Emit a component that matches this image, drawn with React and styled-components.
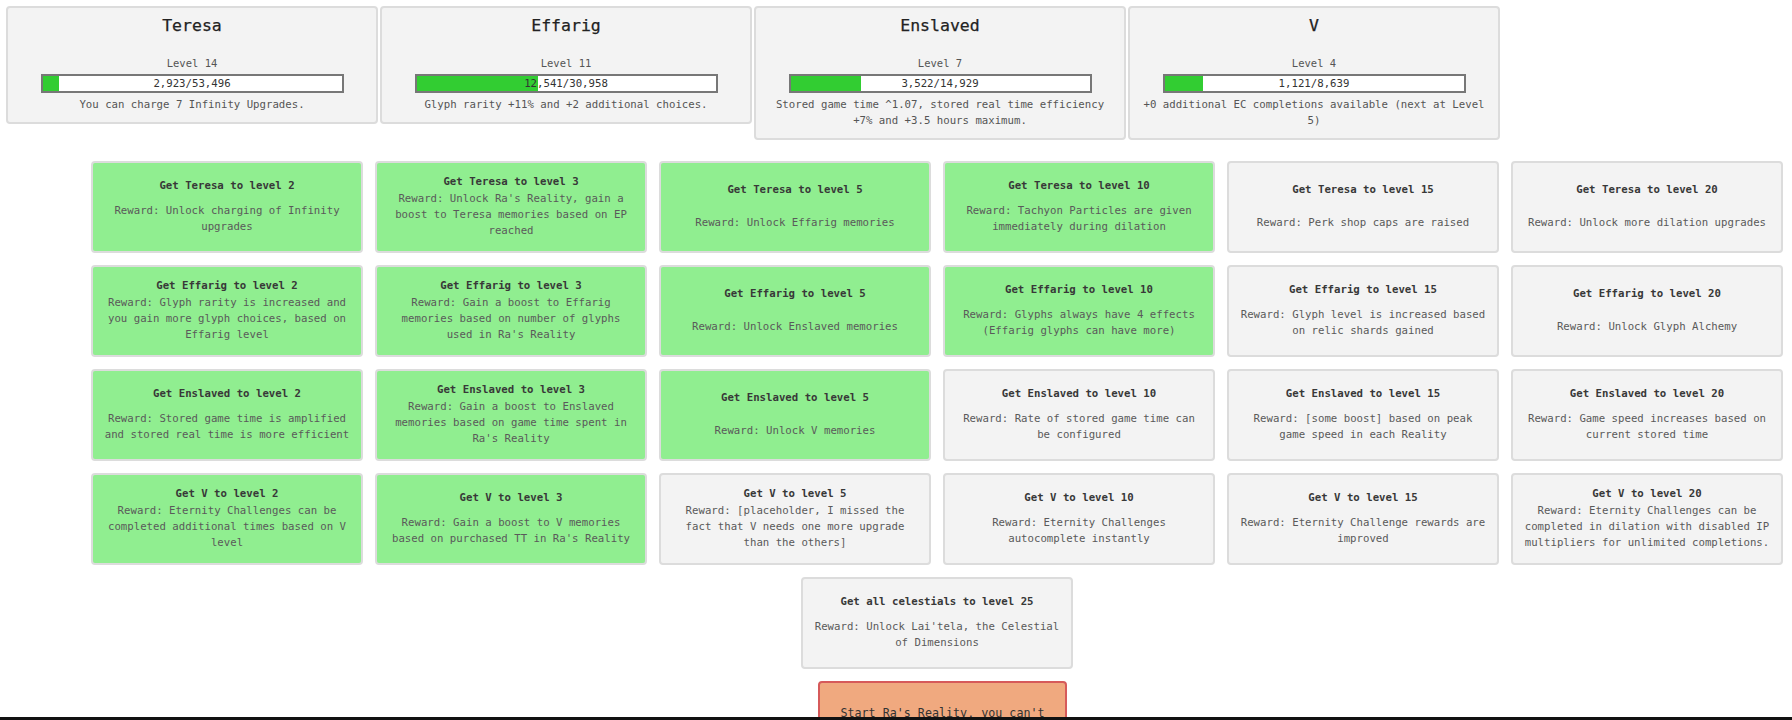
import React from "react"
import styled, { createGlobalStyle } from "styled-components"

const GlobalStyle = createGlobalStyle`
  html, body {
    margin: 0;
    padding: 0;
    overflow: hidden;
    background: #fff;
    font-family: "DejaVu Sans Mono", "Liberation Mono", monospace;
    color: #333;
  }
`

const celestials = [
  {
    name: "Teresa",
    level: 14,
    exp: 2923,
    next: 53496,
    text: "You can charge 7 Infinity Upgrades.",
  },
  {
    name: "Effarig",
    level: 11,
    exp: 12541,
    next: 30958,
    text: "Glyph rarity +11% and +2 additional choices.",
  },
  {
    name: "Enslaved",
    level: 7,
    exp: 3522,
    next: 14929,
    text: "Stored game time ^1.07, stored real time efficiency +7% and +3.5 hours maximum.",
  },
  {
    name: "V",
    level: 4,
    exp: 1121,
    next: 8639,
    text: "+0 additional EC completions available (next at Level 5)",
  },
]

const quests = [
  [
    ["Get Teresa to level 2", "Reward: Unlock charging of Infinity upgrades", true],
    ["Get Teresa to level 3", "Reward: Unlock Ra's Reality, gain a boost to Teresa memories based on EP reached", true],
    ["Get Teresa to level 5", "Reward: Unlock Effarig memories", true],
    ["Get Teresa to level 10", "Reward: Tachyon Particles are given immediately during dilation", true],
    ["Get Teresa to level 15", "Reward: Perk shop caps are raised", false],
    ["Get Teresa to level 20", "Reward: Unlock more dilation upgrades", false],
  ],
  [
    ["Get Effarig to level 2", "Reward: Glyph rarity is increased and you gain more glyph choices, based on Effarig level", true],
    ["Get Effarig to level 3", "Reward: Gain a boost to Effarig memories based on number of glyphs used in Ra's Reality", true],
    ["Get Effarig to level 5", "Reward: Unlock Enslaved memories", true],
    ["Get Effarig to level 10", "Reward: Glyphs always have 4 effects (Effarig glyphs can have more)", true],
    ["Get Effarig to level 15", "Reward: Glyph level is increased based on relic shards gained", false],
    ["Get Effarig to level 20", "Reward: Unlock Glyph Alchemy", false],
  ],
  [
    ["Get Enslaved to level 2", "Reward: Stored game time is amplified and stored real time is more efficient", true],
    ["Get Enslaved to level 3", "Reward: Gain a boost to Enslaved memories based on game time spent in Ra's Reality", true],
    ["Get Enslaved to level 5", "Reward: Unlock V memories", true],
    ["Get Enslaved to level 10", "Reward: Rate of stored game time can be configured", false],
    ["Get Enslaved to level 15", "Reward: [some boost] based on peak game speed in each Reality", false],
    ["Get Enslaved to level 20", "Reward: Game speed increases based on current stored time", false],
  ],
  [
    ["Get V to level 2", "Reward: Eternity Challenges can be completed additional times based on V level", true],
    ["Get V to level 3", "Reward: Gain a boost to V memories based on purchased TT in Ra's Reality", true],
    ["Get V to level 5", "Reward: [placeholder, I missed the fact that V needs one more upgrade than the others]", false],
    ["Get V to level 10", "Reward: Eternity Challenges autocomplete instantly", false],
    ["Get V to level 15", "Reward: Eternity Challenge rewards are improved", false],
    ["Get V to level 20", "Reward: Eternity Challenges can be completed in dilation with disabled IP multipliers for unlimited completions.", false],
  ],
]

const fmt = n => n.toLocaleString("en-US")

const Page = styled.div`
  padding-top: 6px;
`

const CelestialRow = styled.div`
  display: flex;
  align-items: flex-start;
  gap: 2px;
  padding-left: 6px;
`

const CelestialCard = styled.div`
  box-sizing: border-box;
  width: 372px;
  padding: 8px 10px 9px;
  background: #f3f3f3;
  border: 2px solid #dcdcdc;
  border-radius: 4px;
  text-align: center;
`

const CelestialName = styled.div`
  font-size: 16.5px;
  line-height: 20px;
  color: #222;
  margin-bottom: 19px;
  -webkit-text-stroke: 0.25px #222;
`

const LevelText = styled.div`
  font-size: 10.5px;
  line-height: 16px;
  color: #555;
`

const Bar = styled.div`
  position: relative;
  box-sizing: border-box;
  width: 303px;
  height: 19px;
  margin: 3px auto 0;
  border: 2px solid #777;
  background: #fff;
`

const BarFill = styled.div`
  height: 100%;
  background: #32cd32;
`

const BarLabel = styled.div`
  position: absolute;
  inset: 0;
  font-size: 10.7px;
  line-height: 15px;
  color: #333;
`

const CelestialText = styled.div`
  margin-top: 4px;
  font-size: 10.7px;
  line-height: 16px;
  color: #555;
`

const QuestArea = styled.div`
  width: 1692px;
  margin: 21px 0 0 91px;
  display: flex;
  flex-direction: column;
  align-items: center;
  gap: 12px;
`

const QuestGrid = styled.div`
  display: grid;
  grid-template-columns: repeat(6, 272px);
  grid-auto-rows: 92px;
  gap: 12px;
`

const QuestCard = styled.div`
  box-sizing: border-box;
  width: 272px;
  height: 92px;
  padding: 10px 10px 12px;
  display: flex;
  flex-direction: column;
  justify-content: space-around;
  text-align: center;
  background: ${p => (p.$done ? "#90ee90" : "#f3f3f3")};
  border: 2px solid #dcdcdc;
  border-radius: 4px;
  font-size: 10.7px;
  line-height: 15.7px;
`

const QuestTitle = styled.div`
  font-weight: bold;
  color: #383838;
`

const QuestReward = styled.div`
  color: #5a5a5a;
`

const StartButton = styled.div`
  box-sizing: border-box;
  width: 249px;
  margin-left: 11px;
  padding: 22px 10px;
  background: #f0a97f;
  border: 2px solid #d65a5a;
  border-radius: 4px;
  text-align: center;
  font-size: 11.7px;
  line-height: 16px;
  color: #333;
`

const BottomEdge = styled.div`
  position: fixed;
  left: 0;
  right: 0;
  bottom: 0;
  height: 3px;
  background: #111;
`

const Quest = ({ title, reward, done }) => (
  <QuestCard $done={done}>
    <QuestTitle>{title}</QuestTitle>
    <QuestReward>{reward}</QuestReward>
  </QuestCard>
)

const App = () => (
  <Page>
    <GlobalStyle />
    <CelestialRow>
      {celestials.map(c => (
        <CelestialCard key={c.name}>
          <CelestialName>{c.name}</CelestialName>
          <LevelText>Level {c.level}</LevelText>
          <Bar>
            <BarFill style={{ width: `${(c.exp / c.next) * 100}%` }} />
            <BarLabel>
              {fmt(c.exp)}/{fmt(c.next)}
            </BarLabel>
          </Bar>
          <CelestialText>{c.text}</CelestialText>
        </CelestialCard>
      ))}
    </CelestialRow>
    <QuestArea>
      <QuestGrid>
        {quests.flat().map(([title, reward, done]) => (
          <Quest key={title} title={title} reward={reward} done={done} />
        ))}
      </QuestGrid>
      <Quest
        title="Get all celestials to level 25"
        reward="Reward: Unlock Lai'tela, the Celestial of Dimensions"
        done={false}
      />
      <StartButton>
        Start Ra's Reality, you can't gain Infinity Points and all
        dimension multipliers are reduced
      </StartButton>
    </QuestArea>
    <BottomEdge />
  </Page>
)

export default App
